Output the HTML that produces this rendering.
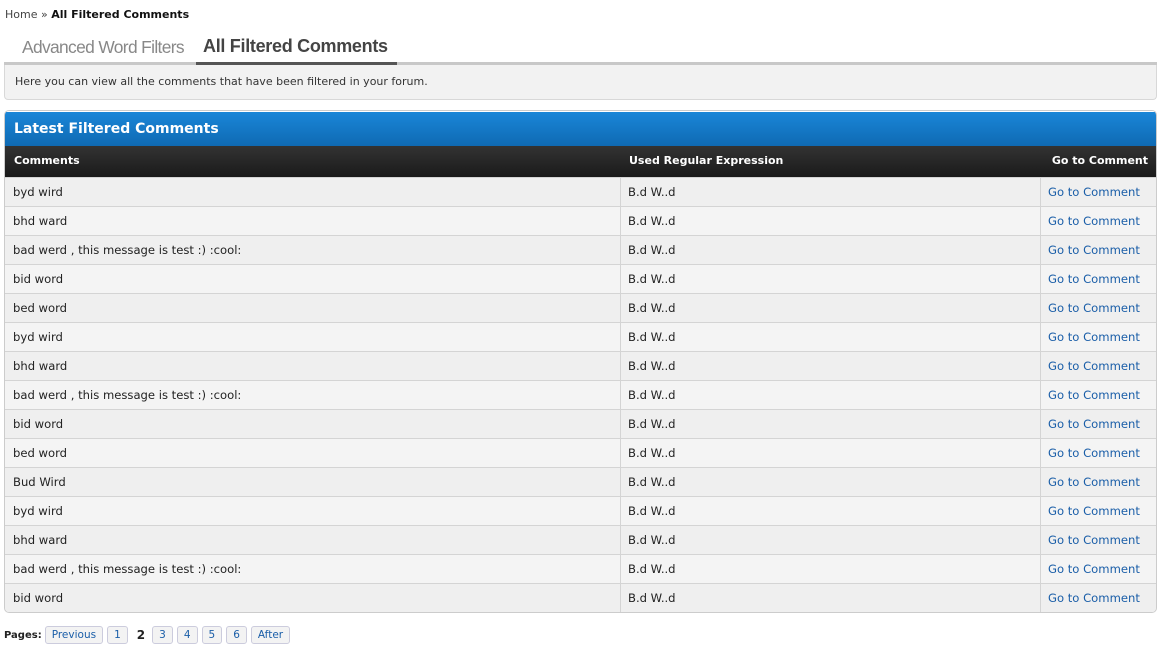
<!DOCTYPE html>
<html><head><meta charset="utf-8"><style>
*{box-sizing:border-box;margin:0;padding:0}
body{width:1163px;height:647px;background:#fff;font-family:"DejaVu Sans","Liberation Sans",sans-serif;font-size:11px;color:#222;position:relative;overflow:hidden}
.bc{position:absolute;left:5px;top:8px;font-size:11px;color:#444}
.bc b{color:#111}
.tabs{position:absolute;left:4px;top:34px;width:1153px;height:31px;border-bottom:3px solid #c8c8c8}
.tab{position:absolute;top:0;height:31px;font-family:"Liberation Sans",sans-serif;font-size:18px;padding-top:2px}
.t1{left:18px;color:#888;letter-spacing:-0.65px;font-size:17.4px;padding-top:3px}
.t2{left:192px;width:201px;color:#444;font-weight:bold;border-bottom:3px solid #555;padding-left:7px;letter-spacing:-0.3px}
.desc{position:absolute;left:4px;top:65px;width:1153px;height:35px;background:#f2f2f2;border:1px solid #d8d8d8;border-top:none;border-radius:0 0 4px 4px;padding:10px 10px;color:#333}
.box{position:absolute;left:4px;top:110px;width:1153px;height:503px;border:1px solid #ccc;border-radius:5px;overflow:hidden;background:#f4f4f4}
.bh{height:35px;background:linear-gradient(#1a86d8,#0f6ab3);color:#fff;font-weight:bold;font-size:14px;padding:9px 9px;border-top:1px solid #fff}
.th{height:31px;background:linear-gradient(#333,#1a1a1a);color:#fff;font-weight:bold;position:relative}
.th span{position:absolute;top:8px}
.row{height:29px;border-top:1px solid #d4d4d4;position:relative;background:#f4f4f4;font-size:11.6px}
.row:nth-child(odd){background:#efefef}
.row span{position:absolute;top:7px}
.c2{left:623px}
.c3{left:1043px;color:#1a5ea8}
.sep1{position:absolute;left:615px;top:0;bottom:0;border-left:1px solid #d4d4d4}
.sep2{position:absolute;left:1035px;top:0;bottom:0;border-left:1px solid #d4d4d4}
.pg{position:absolute;left:4px;top:626px;display:flex;align-items:center;font-size:10.5px}
.pg b{margin-right:3px;font-size:10px}
.pg a{display:inline-block;height:18px;line-height:16px;border:1px solid #ccd;background:#f3f3f3;border-radius:3px;padding:0 6px;color:#1a5ea8;margin-right:4px;text-decoration:none}
.pg .cur{font-weight:bold;font-size:12px;margin:0 7px 0 5px}
</style></head><body>
<div class="bc">Home » <b>All Filtered Comments</b></div>
<div class="tabs"><div class="tab t1">Advanced Word Filters</div><div class="tab t2">All Filtered Comments</div></div>
<div class="desc">Here you can view all the comments that have been filtered in your forum.</div>
<div class="box">
<div class="bh">Latest Filtered Comments</div>
<div class="th"><span style="left:9px">Comments</span><span style="left:624px">Used Regular Expression</span><span style="right:8px">Go to Comment</span></div>
<div>
<div class="row"><span style="left:8px">byd wird</span><span class="c2">B.d W..d</span><span class="c3">Go to Comment</span><i class="sep1"></i><i class="sep2"></i></div>
<div class="row"><span style="left:8px">bhd ward</span><span class="c2">B.d W..d</span><span class="c3">Go to Comment</span><i class="sep1"></i><i class="sep2"></i></div>
<div class="row"><span style="left:8px">bad werd , this message is test :) :cool:</span><span class="c2">B.d W..d</span><span class="c3">Go to Comment</span><i class="sep1"></i><i class="sep2"></i></div>
<div class="row"><span style="left:8px">bid word</span><span class="c2">B.d W..d</span><span class="c3">Go to Comment</span><i class="sep1"></i><i class="sep2"></i></div>
<div class="row"><span style="left:8px">bed word</span><span class="c2">B.d W..d</span><span class="c3">Go to Comment</span><i class="sep1"></i><i class="sep2"></i></div>
<div class="row"><span style="left:8px">byd wird</span><span class="c2">B.d W..d</span><span class="c3">Go to Comment</span><i class="sep1"></i><i class="sep2"></i></div>
<div class="row"><span style="left:8px">bhd ward</span><span class="c2">B.d W..d</span><span class="c3">Go to Comment</span><i class="sep1"></i><i class="sep2"></i></div>
<div class="row"><span style="left:8px">bad werd , this message is test :) :cool:</span><span class="c2">B.d W..d</span><span class="c3">Go to Comment</span><i class="sep1"></i><i class="sep2"></i></div>
<div class="row"><span style="left:8px">bid word</span><span class="c2">B.d W..d</span><span class="c3">Go to Comment</span><i class="sep1"></i><i class="sep2"></i></div>
<div class="row"><span style="left:8px">bed word</span><span class="c2">B.d W..d</span><span class="c3">Go to Comment</span><i class="sep1"></i><i class="sep2"></i></div>
<div class="row"><span style="left:8px">Bud Wird</span><span class="c2">B.d W..d</span><span class="c3">Go to Comment</span><i class="sep1"></i><i class="sep2"></i></div>
<div class="row"><span style="left:8px">byd wird</span><span class="c2">B.d W..d</span><span class="c3">Go to Comment</span><i class="sep1"></i><i class="sep2"></i></div>
<div class="row"><span style="left:8px">bhd ward</span><span class="c2">B.d W..d</span><span class="c3">Go to Comment</span><i class="sep1"></i><i class="sep2"></i></div>
<div class="row"><span style="left:8px">bad werd , this message is test :) :cool:</span><span class="c2">B.d W..d</span><span class="c3">Go to Comment</span><i class="sep1"></i><i class="sep2"></i></div>
<div class="row"><span style="left:8px">bid word</span><span class="c2">B.d W..d</span><span class="c3">Go to Comment</span><i class="sep1"></i><i class="sep2"></i></div>
</div>
</div>
<div class="pg"><b>Pages:</b><a>Previous</a><a>1</a><span class="cur">2</span><a>3</a><a>4</a><a>5</a><a>6</a><a>After</a></div>
</body></html>
